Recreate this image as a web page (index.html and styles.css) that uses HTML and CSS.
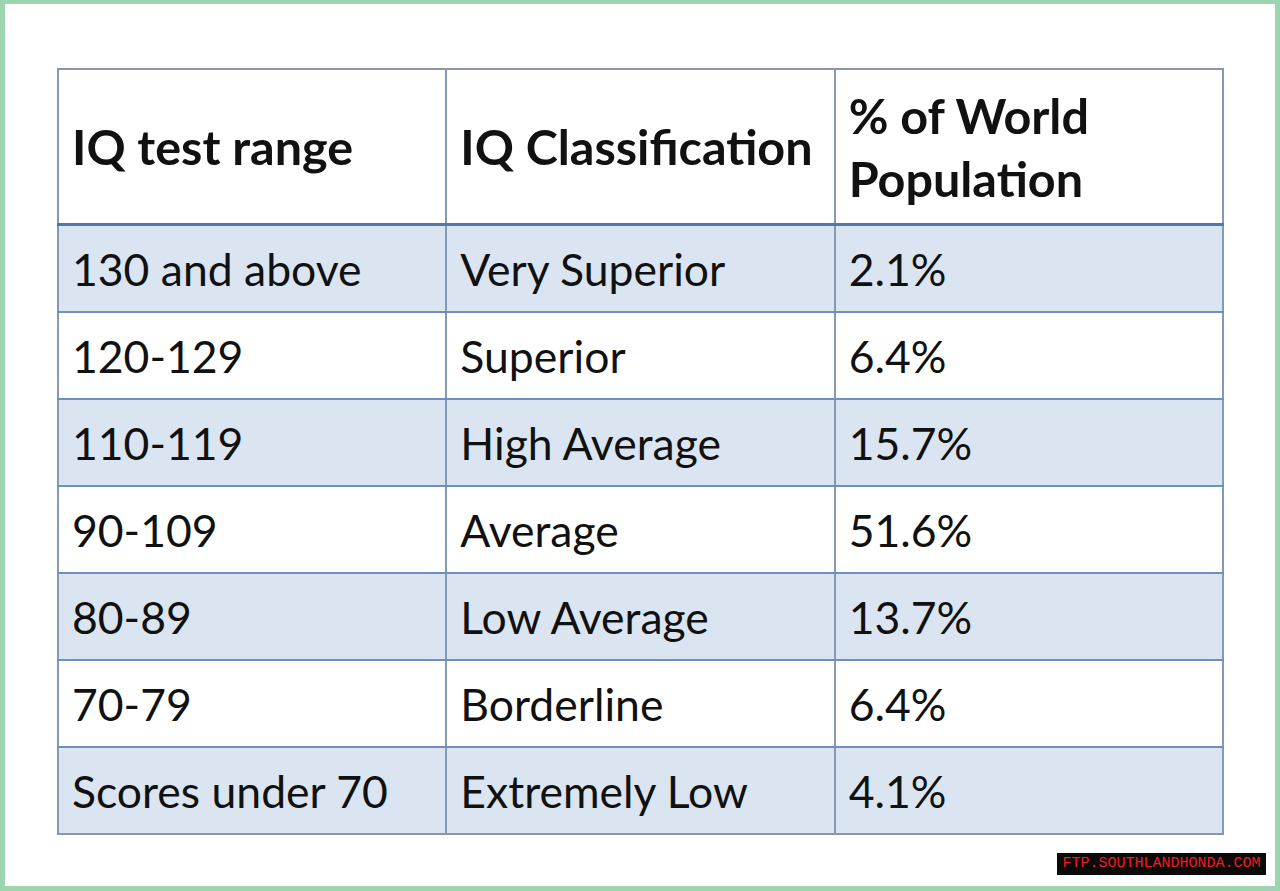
FILE: index.html
```html
<!DOCTYPE html>
<html lang="en">
<head>
<meta charset="utf-8">
<title>IQ Classification</title>
<link rel="stylesheet" href="styles.css">
</head>
<body>
<div class="frame">
  <table class="iq">
    <thead>
      <tr class="head">
        <th>IQ test range</th>
        <th>IQ Classification</th>
        <th>% of World<br>Population</th>
      </tr>
    </thead>
    <tbody>
      <tr class="alt"><td>130 and above</td><td>Very Superior</td><td>2.1%</td></tr>
      <tr><td>120-129</td><td>Superior</td><td>6.4%</td></tr>
      <tr class="alt"><td>110-119</td><td>High Average</td><td>15.7%</td></tr>
      <tr><td>90-109</td><td>Average</td><td>51.6%</td></tr>
      <tr class="alt"><td>80-89</td><td>Low Average</td><td>13.7%</td></tr>
      <tr><td>70-79</td><td>Borderline</td><td>6.4%</td></tr>
      <tr class="alt"><td>Scores under 70</td><td>Extremely Low</td><td>4.1%</td></tr>
    </tbody>
  </table>
  <div class="watermark">FTP.SOUTHLANDHONDA.COM</div>
</div>
</body>
</html>
```

FILE: styles.css
```css
html, body {
  margin: 0;
  padding: 0;
  background: #ffffff;
}

.frame {
  position: relative;
  width: 1280px;
  height: 891px;
  box-sizing: border-box;
  border: 5px solid #9dd5b1;
  border-top-width: 4px;
  padding: 64px 51px 0 52px;
  background: #ffffff;
}

.iq {
  width: 1167px;
  border-collapse: collapse;
  table-layout: fixed;
  font-family: Lato, "Open Sans", sans-serif;
  color: #111111;
  border: 2px solid #8b98a4;
}

.iq th,
.iq td {
  text-align: left;
  vertical-align: middle;
  padding: 0 0 0 13px;
  border-left: 2px solid #8499b3;
  border-right: 2px solid #8499b3;
  white-space: nowrap;
}

.iq th {
  font-size: 48.5px;
  font-weight: 700;
  line-height: 63px;
  height: 153px;
  border-bottom: 3px solid #5377ab;
}

.iq td {
  font-size: 44.5px;
  font-weight: 400;
  height: 85px;
  border-bottom: 2px solid #6f8fbf;
}

.iq tbody tr:last-child td {
  border-bottom: 2px solid #8b98a4;
}

.iq tr.alt td {
  background: #dbe5f1;
}

.watermark {
  position: absolute;
  left: 1052px;
  top: 849px;
  width: 209px;
  height: 22px;
  background: #0a0a0a;
  color: #f01c22;
  font-family: "Liberation Mono", monospace;
  font-size: 15px;
  line-height: 22px;
  text-align: center;
}
```
